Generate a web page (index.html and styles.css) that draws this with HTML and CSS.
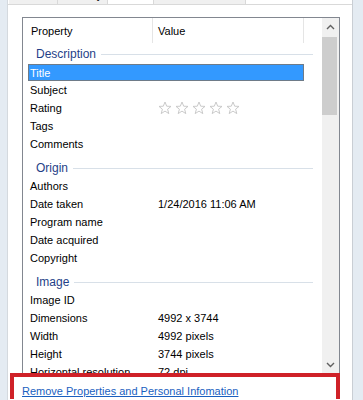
FILE: index.html
```html
<!DOCTYPE html>
<html lang="en">
<head>
    <meta charset="UTF-8">
    <meta name="viewport" content="width=device-width, initial-scale=1.0">
    <title>Details</title>
    <link rel="stylesheet" href="styles.css">
</head>
<body>
    <div class="dialog">
        <div class="tabs">
            <div class="tab tab-general">General</div>
            <div class="tab tab-security">Security</div>
            <div class="tab tab-details active">Details</div>
            <div class="tab tab-versions">Previous Versions</div>
        </div>

        <div class="panel">
            <div class="listbox">
                <div class="list-main">
                    <div class="list-header">
                        <div class="col-head col-property">Property</div>
                        <div class="col-head col-value">Value</div>
                        <div class="col-head col-rest"></div>
                    </div>

                    <div class="group first"><span>Description</span><i></i></div>
                    <div class="row selected"><span>Title</span><span></span></div>
                    <div class="row"><span>Subject</span><span></span></div>
                    <div class="row">
                        <span>Rating</span>
                        <span class="stars">
                            <svg viewBox="0 0 14 14"><polygon points="7,1 8.7,5.2 13,5.4 9.6,8.2 10.8,12.6 7,10.1 3.2,12.6 4.4,8.2 1,5.4 5.3,5.2"/></svg>
                            <svg viewBox="0 0 14 14"><polygon points="7,1 8.7,5.2 13,5.4 9.6,8.2 10.8,12.6 7,10.1 3.2,12.6 4.4,8.2 1,5.4 5.3,5.2"/></svg>
                            <svg viewBox="0 0 14 14"><polygon points="7,1 8.7,5.2 13,5.4 9.6,8.2 10.8,12.6 7,10.1 3.2,12.6 4.4,8.2 1,5.4 5.3,5.2"/></svg>
                            <svg viewBox="0 0 14 14"><polygon points="7,1 8.7,5.2 13,5.4 9.6,8.2 10.8,12.6 7,10.1 3.2,12.6 4.4,8.2 1,5.4 5.3,5.2"/></svg>
                            <svg viewBox="0 0 14 14"><polygon points="7,1 8.7,5.2 13,5.4 9.6,8.2 10.8,12.6 7,10.1 3.2,12.6 4.4,8.2 1,5.4 5.3,5.2"/></svg>
                        </span>
                    </div>
                    <div class="row"><span>Tags</span><span></span></div>
                    <div class="row"><span>Comments</span><span></span></div>

                    <div class="group"><span>Origin</span><i></i></div>
                    <div class="row"><span>Authors</span><span></span></div>
                    <div class="row"><span>Date taken</span><span>1/24/2016 11:06 AM</span></div>
                    <div class="row"><span>Program name</span><span></span></div>
                    <div class="row"><span>Date acquired</span><span></span></div>
                    <div class="row"><span>Copyright</span><span></span></div>

                    <div class="group"><span>Image</span><i></i></div>
                    <div class="row"><span>Image ID</span><span></span></div>
                    <div class="row"><span>Dimensions</span><span>4992 x 3744</span></div>
                    <div class="row"><span>Width</span><span>4992 pixels</span></div>
                    <div class="row"><span>Height</span><span>3744 pixels</span></div>
                    <div class="row"><span>Horizontal resolution</span><span>72 dpi</span></div>
                </div>

                <div class="scrollbar">
                    <div class="scroll-btn">
                        <svg viewBox="0 0 9 6"><polyline points="1,5 4.5,1.5 8,5"/></svg>
                    </div>
                    <div class="scroll-thumb"></div>
                    <div class="scroll-track"></div>
                    <div class="scroll-btn bottom">
                        <svg viewBox="0 0 9 6"><polyline points="1,1 4.5,4.5 8,1"/></svg>
                    </div>
                </div>
            </div>

            <div class="highlight">
                <a href="#" class="remove-link">Remove Properties and Personal Infomation</a>
            </div>
        </div>
    </div>
</body>
</html>
```

FILE: styles.css
```css
body {
    margin: 0;
    width: 363px;
    height: 400px;
    overflow: hidden;
    background-color: #e4ebf2;
    font-family: "Liberation Sans", Arial, sans-serif;
    font-size: 11px;
    color: #000000;
}

.dialog {
    margin-left: 7px;
    width: 344px;
    height: 400px;
    background-color: #ffffff;
    border-left: 1px solid #d4d9de;
    border-right: 1px solid #c9ced4;
}

.tabs {
    display: flex;
    height: 4px;
    overflow: hidden;
    border-bottom: 1px solid #d9d9d9;
    padding-left: 1px;
}

.tab {
    line-height: 18px;
    margin-top: -14px;
    text-align: center;
    color: #000000;
    background-color: #f0f0f0;
    border-right: 1px solid #d9d9d9;
    height: 18px;
}

.tab-general { width: 48px; }
.tab-security { width: 49px; }
.tab-details { width: 45px; }
.tab-versions { width: 91px; }

.tab.active {
    background-color: #ffffff;
}

.panel {
    padding: 12px 12px 0 14px;
}

.listbox {
    display: flex;
    height: 357px;
    border: 1px solid #828790;
    overflow: hidden;
}

.list-main {
    flex: 1;
    overflow: hidden;
}

.list-header {
    display: flex;
    height: 26px;
}

.col-head {
    line-height: 26px;
    border-right: 1px solid #e5e5e5;
    height: 25px;
}

.col-property {
    width: 121px;
    padding-left: 8px;
}

.col-value {
    width: 145px;
    padding-left: 5px;
}

.col-rest {
    flex: 1;
    border-right: none;
}

.group {
    display: flex;
    align-items: center;
    gap: 5px;
    height: 18px;
    padding: 6px 9px 0 13px;
    color: #1f3f88;
    font-size: 12px;
}

.group.first {
    height: 18px;
    padding-top: 1px;
}

.group i {
    flex: 1;
    height: 1px;
    background-color: #d8e0e8;
}

.row {
    display: grid;
    grid-template-columns: 128px 1fr;
    align-items: center;
    box-sizing: border-box;
    width: 276px;
    height: 18px;
    margin-left: 5px;
    padding-left: 1px;
    border: 1px solid transparent;
    white-space: nowrap;
}

.row.selected {
    height: 17px;
    margin-top: 1px;
    background-color: #3399ff;
    border-color: #6e7b88;
    color: #ffffff;
}

.stars {
    display: flex;
    gap: 3px;
}

.stars svg {
    width: 14px;
    height: 14px;
    fill: none;
    stroke: #c4c4c4;
    stroke-width: 0.9;
}

.scrollbar {
    display: flex;
    flex-direction: column;
    width: 17px;
    background-color: #f0f0f0;
}

.scroll-btn {
    height: 17px;
    display: flex;
    align-items: center;
    justify-content: center;
}

.scroll-btn.bottom {
    margin-bottom: 2px;
}

.scroll-btn svg {
    width: 9px;
    height: 6px;
    fill: none;
    stroke: #606060;
    stroke-width: 1.4;
}

.scroll-thumb {
    height: 78px;
    margin: 2px 2px 0 0;
    background-color: #cdcdcd;
}

.scroll-track {
    flex: 1;
}

.highlight {
    position: relative;
    width: 322px;
    height: 22px;
    margin: -3px 0 0 -12px;
    border: 4px solid #cf2128;
    border-bottom: none;
    background-color: #ffffff;
}

.remove-link {
    display: block;
    padding: 7px 0 0 8px;
    line-height: 15px;
    color: #1a5fbf;
    text-decoration: underline;
    font-size: 11px;
}
```
